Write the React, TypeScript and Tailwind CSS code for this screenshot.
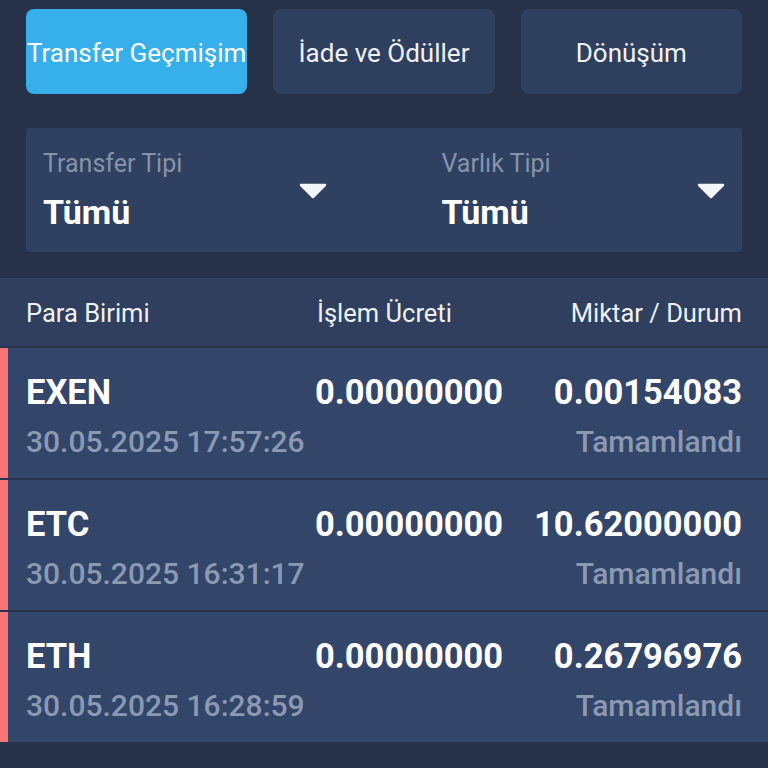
const tabs = ["Transfer Geçmişim", "İade ve Ödüller", "Dönüşüm"];

const rows = [
  { coin: "EXEN", date: "30.05.2025 17:57:26", fee: "0.00000000", amount: "0.00154083", status: "Tamamlandı" },
  { coin: "ETC", date: "30.05.2025 16:31:17", fee: "0.00000000", amount: "10.62000000", status: "Tamamlandı" },
  { coin: "ETH", date: "30.05.2025 16:28:59", fee: "0.00000000", amount: "0.26796976", status: "Tamamlandı" },
];

function Caret() {
  return (
    <svg width="28" height="16" viewBox="0 0 28 16" className="shrink-0">
      <path d="M2 2 L26 2 L14 14 Z" fill="#f3f5f8" stroke="#f3f5f8" strokeWidth="2.5" strokeLinejoin="round" />
    </svg>
  );
}

function Select({ label }: { label: string }) {
  return (
    <div className="flex items-center justify-between">
      <div className="flex flex-col">
        <span className="text-[25px] leading-[30px] text-[#8593ab]">{label}</span>
        <span className="mt-[13px] text-[34px] leading-[40px] font-bold text-white">Tümü</span>
      </div>
      <div className="mt-[2px]">
        <Caret />
      </div>
    </div>
  );
}

export default function App() {
  return (
    <div className="min-h-[768px] w-[768px] bg-[#26314a] pt-[9px] font-['Roboto',sans-serif]">
      <div className="grid grid-cols-3 gap-[26px] px-[26px]">
        {tabs.map((t, i) => (
          <div
            key={t}
            className={`flex h-[85px] items-center justify-center rounded-[8px] pt-[3px] text-[26px] whitespace-nowrap ${
              i === 0 ? "bg-[#36afeb] text-white" : "bg-[#2f3f5e] text-[#eef1f6]"
            }`}
          >
            {t}
          </div>
        ))}
      </div>

      <div className="mx-[26px] mt-[34px] grid h-[124px] grid-cols-2 items-center gap-[115px] rounded-[3px] bg-[#2f4060] px-[17px]">
        <Select label="Transfer Tipi" />
        <Select label="Varlık Tipi" />
      </div>

      <div className="mt-[26px] flex h-[70px] items-center border-b-2 border-[#28354f] bg-[#2f3f5d] px-[26px] pt-[3px] text-[25.5px] text-[#eef1f6]">
        <span className="w-[291px]">Para Birimi</span>
        <span className="flex-1">İşlem Ücreti</span>
        <span>Miktar / Durum</span>
      </div>

      <div className="flex flex-col">
        {rows.map((r, i) => (
          <div key={r.coin} className={`flex bg-[#33466a] ${i > 0 ? "border-t-2 border-[#27334c]" : ""}`}>
            <div className="w-[8px] bg-[#f97474]" />
            <div className="flex h-[130px] flex-1 flex-col justify-center pl-[18px] pr-[26px] pt-[5px]">
              <div className="flex items-center text-[34.5px] leading-[40px] font-bold text-white">
                <span className="w-[289px]">{r.coin}</span>
                <span className="flex-1">{r.fee}</span>
                <span>{r.amount}</span>
              </div>
              <div className="mt-[12px] flex items-center justify-between text-[30px] leading-[36px] font-medium text-[#8b99b2]">
                <span>{r.date}</span>
                <span>{r.status}</span>
              </div>
            </div>
          </div>
        ))}
      </div>
    </div>
  );
}
